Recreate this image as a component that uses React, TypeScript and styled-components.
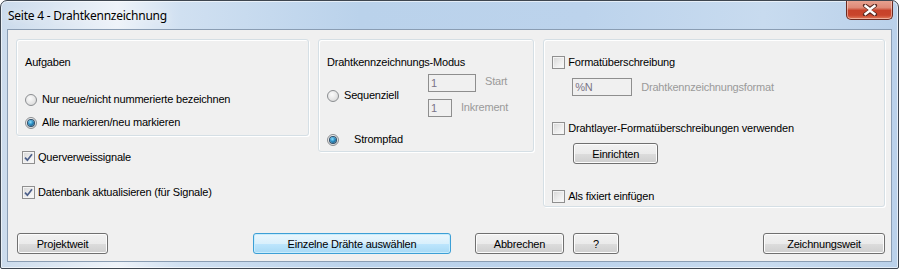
import React from "react";
import styled, { createGlobalStyle } from "styled-components";

const GlobalStyle = createGlobalStyle`
	html, body {
		margin: 0;
		padding: 0;
		background: #ffffff;
	}
	body {
		font-family: "Liberation Sans", Arial, sans-serif;
		font-size: 11px;
		letter-spacing: -0.2px;
	}
`;

const Radio = ({ checked }: { checked?: boolean }) => (
	<RadioCircle>{checked && <RadioDot />}</RadioCircle>
);

const Check = ({ checked }: { checked?: boolean }) => (
	<CheckBox>
		{checked && (
			<svg width="9" height="9" viewBox="0 0 9 9">
				<path
					d="M1 4.6 L3.4 7.2 L8 1.2"
					fill="none"
					stroke="#4c5f8a"
					strokeWidth="1.7"
					strokeLinejoin="miter"
				/>
			</svg>
		)}
	</CheckBox>
);

const App = () => {
	return (
		<>
			<GlobalStyle />
			<Window>
				<TitleBar>
					<Title>Seite 4 - Drahtkennzeichnung</Title>
					<CloseButton>
						<svg width="18" height="12" viewBox="0 0 18 12">
							<path
								d="M4 1.5 L9 5 L14 1.5 M4 10.5 L9 7 L14 10.5"
								fill="none"
								stroke="#5a2a22"
								strokeWidth="4.2"
								strokeLinecap="round"
							/>
							<path
								d="M4.5 2 L9 5.5 L13.5 2 M4.5 10 L9 6.5 L13.5 10"
								fill="none"
								stroke="#ffffff"
								strokeWidth="2.4"
								strokeLinecap="square"
							/>
						</svg>
					</CloseButton>
				</TitleBar>
				<Client>
					<GroupsRow>
						<LeftColumn>
							<GroupBox $w={293} $h={97}>
								<GroupTitle>Aufgaben</GroupTitle>
								<OptionList $gap={10}>
									<Option>
										<Radio />
										<Label>Nur neue/nicht nummerierte bezeichnen</Label>
									</Option>
									<Option>
										<Radio checked />
										<Label>Alle markieren/neu markieren</Label>
									</Option>
								</OptionList>
							</GroupBox>
							<LooseChecks>
								<Option>
									<Check checked />
									<CheckLabel>Querverweissignale</CheckLabel>
								</Option>
								<Option>
									<Check checked />
									<CheckLabel>Datenbank aktualisieren (für Signale)</CheckLabel>
								</Option>
							</LooseChecks>
						</LeftColumn>

						<GroupBox $w={217} $h={113}>
							<GroupTitle>Drahtkennzeichnungs-Modus</GroupTitle>
							<ModeGrid>
								<Option>
									<Radio />
									<Label>Sequenziell</Label>
								</Option>
								<FieldStack>
									<FieldRow>
										<TextInput $w={48}>1</TextInput>
										<DimLabel $shift={-2}>Start</DimLabel>
									</FieldRow>
									<FieldRow>
										<TextInput $w={24}>1</TextInput>
										<DimLabel $shift={-1}>Inkrement</DimLabel>
									</FieldRow>
								</FieldStack>
							</ModeGrid>
							<StromRow>
								<Radio checked />
								<Label $indent={10}>Strompfad</Label>
							</StromRow>
						</GroupBox>

						<GroupBox $w={343} $h={168}>
							<RightStack>
								<Option>
									<Check />
									<CheckLabel>Formatüberschreibung</CheckLabel>
								</Option>
								<FormatRow>
									<TextInput $w={60}>%N</TextInput>
									<DimLabel>Drahtkennzeichnungsformat</DimLabel>
								</FormatRow>
								<LayerRow>
									<Check />
									<CheckLabel>Drahtlayer-Formatüberschreibungen verwenden</CheckLabel>
								</LayerRow>
								<SetupRow>
									<Button $w={85}>Einrichten</Button>
								</SetupRow>
								<FixRow>
									<Check />
									<CheckLabel>Als fixiert einfügen</CheckLabel>
								</FixRow>
							</RightStack>
						</GroupBox>
					</GroupsRow>

					<ButtonBar>
						<Button $w={91}>Projektweit</Button>
						<Button $w={198} $primary style={{ marginLeft: 145 }}>
							Einzelne Drähte auswählen
						</Button>
						<Button $w={89} style={{ marginLeft: 24 }}>
							Abbrechen
						</Button>
						<Button $w={46} style={{ marginLeft: 9 }}>
							?
						</Button>
						<Spacer />
						<Button $w={122}>Zeichnungsweit</Button>
					</ButtonBar>
				</Client>
			</Window>
		</>
	);
};

const Window = styled.div`
	box-sizing: border-box;
	width: 899px;
	height: 269px;
	display: flex;
	flex-direction: column;
	border: 1px solid #3e4650;
	border-radius: 7px 7px 2px 2px;
	background: linear-gradient(
		to right,
		#cbdbec 0%,
		#dbe6f2 6%,
		#eef3f9 13%,
		#d0e0f1 20%,
		#bad2eb 40%,
		#bcd3ec 65%,
		#c8dbef 85%,
		#bad1ea 100%
	);
	box-shadow: inset 0 0 0 1px rgba(255, 255, 255, 0.6);
	overflow: hidden;
`;

const TitleBar = styled.div`
	height: 28px;
	display: flex;
	align-items: flex-start;
	justify-content: space-between;
	padding: 0 5px 0 7px;
`;

const Title = styled.div`
	font-family: "Noto Sans", "Open Sans", sans-serif;
	font-size: 12px;
	letter-spacing: -0.25px;
	color: #000000;
	margin-top: 6px;
	text-shadow: 0 0 8px rgba(255, 255, 255, 0.9);
`;

const CloseButton = styled.div`
	box-sizing: border-box;
	width: 47px;
	height: 20px;
	margin-top: -1px;
	display: flex;
	align-items: center;
	justify-content: center;
	border: 1px solid #6b2a20;
	border-top: none;
	border-radius: 0 0 5px 5px;
	background: linear-gradient(
		to bottom,
		#e8a493 0%,
		#de8a77 40%,
		#c7422a 55%,
		#c9452c 80%,
		#e07b5c 100%
	);
	box-shadow: inset 0 0 0 1px rgba(255, 220, 210, 0.55);
`;

const Client = styled.div`
	flex: 1;
	margin: 0 6px 6px 6px;
	display: flex;
	flex-direction: column;
	border: 1px solid #8a9db3;
	background: #f0f0f0;
	padding: 9px 6px 0 8px;
`;

const GroupsRow = styled.div`
	display: flex;
	align-items: flex-start;
	gap: 9px;
`;

const LeftColumn = styled.div`
	display: flex;
	flex-direction: column;
`;

const GroupBox = styled.div<{ $w: number; $h: number }>`
	box-sizing: border-box;
	width: ${(p) => p.$w}px;
	height: ${(p) => p.$h}px;
	border: 1px solid #d5dfe5;
	border-radius: 3px;
	box-shadow: inset 1px 1px 0 #ffffff, 1px 1px 0 #ffffff;
	padding: 16px 8px 0 8px;
`;

const GroupTitle = styled.div`
	line-height: 13px;
	color: #000000;
`;

const OptionList = styled.div<{ $gap: number }>`
	display: flex;
	flex-direction: column;
	gap: ${(p) => p.$gap}px;
	margin-top: 24px;
`;

const Option = styled.div`
	display: flex;
	align-items: center;
	height: 13px;
`;

const Label = styled.span<{ $indent?: number }>`
	margin-left: ${(p) => 5 + (p.$indent ?? 0)}px;
	line-height: 13px;
	white-space: nowrap;
	color: #000000;
`;

const CheckLabel = styled.span`
	margin-left: 3px;
	line-height: 13px;
	white-space: nowrap;
	color: #000000;
`;

const DimLabel = styled.span<{ $shift?: number }>`
	margin-left: 9px;
	line-height: 13px;
	white-space: nowrap;
	color: #9a9a9a;
	position: relative;
	top: ${(p) => p.$shift ?? 0}px;
`;

const RadioCircle = styled.span`
	box-sizing: border-box;
	width: 12px;
	height: 12px;
	flex: none;
	border-radius: 50%;
	border: 1px solid #8b8e91;
	background: radial-gradient(circle at 40% 35%, #fbfbfb 0%, #e6e6e6 55%, #cfcfcf 100%);
	display: flex;
	align-items: center;
	justify-content: center;
`;

const RadioDot = styled.span`
	width: 6px;
	height: 6px;
	border-radius: 50%;
	background: radial-gradient(circle at 40% 35%, #8fe0ff 0%, #2c8fc4 45%, #0c3a5f 100%);
	box-shadow: 0 0 0 1px #2d4e6a;
`;

const CheckBox = styled.span`
	box-sizing: border-box;
	width: 13px;
	height: 13px;
	flex: none;
	border: 1px solid #8f8f8f;
	background: linear-gradient(135deg, #d6d6d6 0%, #efefef 60%, #fbfbfb 100%);
	box-shadow: inset 0 0 0 1px #f4f4f4;
	display: flex;
	align-items: center;
	justify-content: center;
`;

const LooseChecks = styled.div`
	display: flex;
	flex-direction: column;
	gap: 22px;
	margin-top: 15px;
	margin-left: 6px;
`;

const ModeGrid = styled.div`
	display: grid;
	grid-template-columns: 101px auto;
	align-items: center;
	margin-top: 5px;
`;

const FieldStack = styled.div`
	display: flex;
	flex-direction: column;
	gap: 7px;
`;

const FieldRow = styled.div`
	display: flex;
	align-items: center;
`;

const TextInput = styled.div<{ $w: number }>`
	box-sizing: border-box;
	width: ${(p) => p.$w}px;
	height: 18px;
	border: 1px solid #8e8e8e;
	padding: 0 2px;
	line-height: 16px;
	color: #7a7488;
`;

const StromRow = styled.div`
	display: flex;
	align-items: center;
	margin-top: 16px;
`;

const RightStack = styled.div`
	display: flex;
	flex-direction: column;
`;

const FormatRow = styled.div`
	display: flex;
	align-items: center;
	margin-top: 9px;
	margin-left: 20px;
`;

const LayerRow = styled(Option)`
	margin-top: 26px;
`;

const SetupRow = styled.div`
	display: flex;
	margin-top: 8px;
	margin-left: 21px;
`;

const FixRow = styled(Option)`
	margin-top: 26px;
`;

const ButtonBar = styled.div`
	display: flex;
	align-items: center;
	margin-top: auto;
	margin-bottom: 7px;
	padding-left: 1px;
`;

const Spacer = styled.div`
	flex: 1;
`;

const Button = styled.div<{ $w: number; $primary?: boolean }>`
	box-sizing: border-box;
	width: ${(p) => p.$w}px;
	height: 21px;
	display: flex;
	align-items: center;
	justify-content: center;
	border: 1px solid ${(p) => (p.$primary ? "#3c9fd6" : "#707070")};
	border-radius: 3px;
	background: ${(p) =>
		p.$primary
			? "linear-gradient(to bottom, #eaf6fd 0%, #d9f0fc 50%, #bee6fd 51%, #a7d9f5 100%)"
			: "linear-gradient(to bottom, #f2f2f2 0%, #ebebeb 50%, #dddddd 51%, #cfcfcf 100%)"};
	box-shadow: inset 0 0 0 1px ${(p) => (p.$primary ? "#c8ecfc" : "#fcfcfc")};
	color: #000000;
	white-space: nowrap;
`;

export default App;
